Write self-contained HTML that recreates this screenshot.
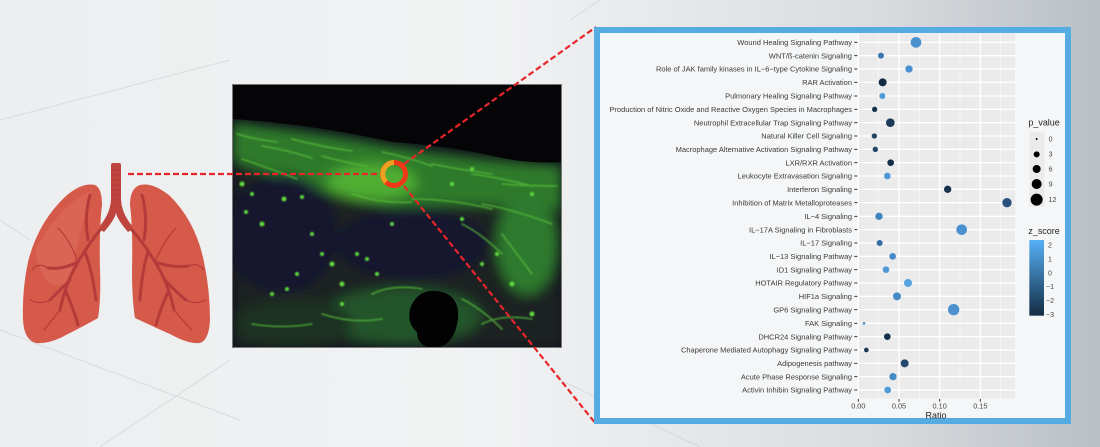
<!DOCTYPE html>
<html><head><meta charset="utf-8"><style>
html,body{margin:0;padding:0;width:1100px;height:447px;overflow:hidden;background:#eef0f1}
svg{display:block}
</style></head><body>
<svg width="1100" height="447" viewBox="0 0 1100 447" xmlns="http://www.w3.org/2000/svg" font-family="Liberation Sans, Arial, sans-serif">
<defs>
<linearGradient id="bg" x1="0" y1="0" x2="1" y2="0">
<stop offset="0" stop-color="#eceeef"/><stop offset="0.45" stop-color="#f1f2f3"/><stop offset="0.8" stop-color="#d9dcdf"/><stop offset="1" stop-color="#b9bfc4"/>
</linearGradient>
<linearGradient id="zs" x1="0" y1="0" x2="0" y2="1"><stop offset="0" stop-color="#56b1f7"/><stop offset="1" stop-color="#132b43"/></linearGradient>
<filter id="b3"><feGaussianBlur stdDeviation="3"/></filter>
<filter id="b6"><feGaussianBlur stdDeviation="6"/></filter>
<filter id="b1"><feGaussianBlur stdDeviation="0.7"/></filter>
<clipPath id="imgc"><rect x="0" y="0" width="330" height="264"/></clipPath>
</defs>
<rect width="1100" height="447" fill="url(#bg)"/>
<g stroke="#c9ced2" stroke-width="1" opacity="0.6" fill="none">
<path d="M0 120 L230 60 M0 330 L240 420 M100 447 L230 360 M560 380 L700 447 M0 220 L30 240 M570 20 L600 0"/>
</g>

<!-- Lungs -->
<g>
<rect x="111" y="163" width="10" height="40" rx="2" fill="#c0443e"/>
<g stroke="#a8333a" stroke-width="0.6"><path d="M111 170h10M111 175h10M111 180h10M111 185h10M111 190h10M111 195h10M111 200h10"/></g>
<path d="M111 200 Q110 215 98 228 L104 232 Q116 218 116 212 Q116 218 128 232 L134 228 Q122 215 121 200 Z" fill="#c0443e"/>
<path d="M95 185 Q82 182 66 196 Q38 222 28 262 Q22 290 23 320 Q24 340 36 343 Q50 344 66 335 Q84 326 98 318 Q101 300 100 270 Q99 230 102 205 Q102 188 95 185 Z" fill="#d65a4a"/>
<path d="M140 185 Q153 182 170 196 Q196 222 204 262 Q210 290 210 320 Q209 340 200 343 Q188 344 172 335 Q152 326 135 318 Q132 300 132 270 Q133 230 130 205 Q130 188 140 185 Z" fill="#d65a4a"/>
<path d="M35 250 Q60 205 92 190 Q80 230 70 280 Q45 300 35 250Z" fill="#e07060" opacity="0.5"/>
<g stroke="#b53a3a" fill="none" stroke-linecap="round">
<path d="M100 230 Q88 245 78 262 Q66 282 60 310 M78 262 Q62 270 48 268 M85 252 Q92 270 96 300 M70 280 Q60 290 50 300 M88 240 Q84 215 90 195 M66 292 Q74 310 78 325" stroke-width="3"/>
<path d="M132 230 Q145 245 155 262 Q168 282 174 310 M155 262 Q172 268 188 266 M148 252 Q142 270 140 300 M165 280 Q176 292 186 300 M144 240 Q148 215 142 195 M168 292 Q160 310 156 325" stroke-width="3"/>
<path d="M48 268 Q38 262 32 270 M60 310 Q52 320 44 330 M50 300 Q40 305 30 300 M78 262 Q70 240 58 228 M188 266 Q198 262 204 270 M174 310 Q182 320 192 330 M186 300 Q196 305 206 300 M155 262 Q164 240 176 228" stroke-width="1.2"/>
</g>
</g>

<!-- Microscopy image -->
<g transform="translate(232,84)">
<g clip-path="url(#imgc)">
<rect width="330" height="264" fill="#0d0e1c"/>
<g filter="url(#b6)">
<path d="M0 40 Q80 45 150 60 Q250 75 330 80 L330 264 L0 264 Z" fill="#1a2424"/>
<path d="M0 38 Q80 48 160 62 Q250 78 330 82 L330 125 Q250 118 160 122 Q80 108 0 75 Z" fill="#2f7a2c"/>
<ellipse cx="140" cy="98" rx="45" ry="18" fill="#4fae30"/>
<ellipse cx="295" cy="160" rx="30" ry="50" fill="#2e7a2e"/>
<ellipse cx="50" cy="150" rx="55" ry="60" fill="#14132e"/>
<ellipse cx="180" cy="160" rx="75" ry="36" fill="#13122e"/>
<ellipse cx="170" cy="232" rx="80" ry="28" fill="#24552a"/>
<ellipse cx="60" cy="240" rx="60" ry="25" fill="#1a3024"/>
</g>
<g stroke="#58c03a" stroke-width="1.6" fill="none" opacity="0.75" stroke-linecap="round" filter="url(#b1)">
<path d="M5 50 q20 6 40 8 M30 62 q25 4 50 12 M60 55 q30 8 60 12 M90 72 q20 6 45 10 M150 68 q25 5 50 14 M200 80 q30 6 60 10 M240 90 q30 4 60 12 M270 100 q25 2 55 2 M10 75 q30 10 55 20 M120 110 q30 10 60 8 M180 115 q40 0 80 10 M250 120 q30 5 70 20 M230 140 q20 10 40 30 M270 150 q15 20 30 40 M140 210 q20 -10 50 -5 M230 215 q20 10 40 30 M90 230 q30 10 60 5 M20 240 q30 5 60 0 M250 240 q20 -10 50 -5"/>
</g>
<path d="M0 0 H330 V78 Q300 80 270 74 Q220 62 160 58 Q80 40 0 35 Z" fill="#050507"/>
<path d="M178 225 Q185 205 205 207 Q228 210 226 235 Q222 264 200 264 Q185 262 185 248 Q175 240 178 225Z" fill="#020203"/>
<g fill="#5fd83c" filter="url(#b1)">
<circle cx="10" cy="100" r="2.5"/><circle cx="20" cy="110" r="2"/><circle cx="52" cy="115" r="2.5"/><circle cx="70" cy="113" r="2"/><circle cx="30" cy="140" r="2.5"/><circle cx="14" cy="128" r="2"/>
<circle cx="90" cy="170" r="2"/><circle cx="100" cy="180" r="2.5"/><circle cx="110" cy="200" r="2.5"/><circle cx="55" cy="205" r="2"/><circle cx="65" cy="190" r="2"/><circle cx="40" cy="210" r="2"/>
<circle cx="125" cy="170" r="2"/><circle cx="135" cy="175" r="2"/><circle cx="145" cy="190" r="2"/><circle cx="160" cy="140" r="2"/><circle cx="230" cy="135" r="2"/><circle cx="250" cy="180" r="2"/><circle cx="265" cy="170" r="2"/>
<circle cx="220" cy="100" r="2"/><circle cx="240" cy="85" r="2"/><circle cx="300" cy="110" r="2"/><circle cx="280" cy="200" r="2.5"/><circle cx="300" cy="230" r="2.5"/><circle cx="110" cy="220" r="2"/><circle cx="80" cy="150" r="2"/>
</g>
</g>
<rect x="0.5" y="0.5" width="329" height="263" fill="none" stroke="#777" stroke-width="1"/>
</g>

<!-- dashed lines -->
<g stroke="#e8262a" stroke-width="2.2" stroke-dasharray="6 3" fill="none">
<line x1="128" y1="174" x2="380" y2="174"/>
<line x1="404" y1="164" x2="596" y2="27"/>
<line x1="404" y1="186" x2="596" y2="424"/>
</g>
<circle cx="394" cy="174" r="11.5" fill="none" stroke="#f03818" stroke-width="5"/>
<path d="M394 162.5 A11.5 11.5 0 0 0 386 182" fill="none" stroke="#f0a020" stroke-width="5"/>

<!-- Plot frame -->
<rect x="597" y="30" width="471" height="391" fill="#f5f6f7" stroke="#55ace2" stroke-width="6"/>

<g transform="translate(590,20) scale(0.33333)">
<rect x="805" y="40" width="470" height="1095" fill="#ebebeb"/>
<g stroke="#f7f7f7" stroke-width="2">
<path d="M866 40V1135M988 40V1135M1110 40V1135M1232 40V1135"/>
</g>
<g stroke="#ffffff" stroke-width="4">
<path d="M805 40V1135M927 40V1135M1049 40V1135M1171 40V1135"/>
<path d="M805 67H1275M805 107H1275M805 147H1275M805 187H1275M805 228H1275M805 268H1275M805 308H1275M805 348H1275M805 388H1275M805 428H1275M805 468H1275M805 508H1275M805 548H1275M805 589H1275M805 629H1275M805 669H1275M805 709H1275M805 749H1275M805 789H1275M805 829H1275M805 869H1275M805 910H1275M805 950H1275M805 990H1275M805 1030H1275M805 1070H1275M805 1110H1275"/>
</g>
<g font-size="22.5" fill="#3a3a3a" text-anchor="end">
<text x="786" y="75">Wound Healing Signaling Pathway</text>
<text x="786" y="115">WNT/ß-catenin Signaling</text>
<text x="786" y="155">Role of JAK family kinases in IL−6−type Cytokine Signaling</text>
<text x="786" y="195">RAR Activation</text>
<text x="786" y="236">Pulmonary Healing Signaling Pathway</text>
<text x="786" y="276">Production of Nitric Oxide and Reactive Oxygen Species in Macrophages</text>
<text x="786" y="316">Neutrophil Extracellular Trap Signaling Pathway</text>
<text x="786" y="356">Natural Killer Cell Signaling</text>
<text x="786" y="396">Macrophage Alternative Activation Signaling Pathway</text>
<text x="786" y="436">LXR/RXR Activation</text>
<text x="786" y="476">Leukocyte Extravasation Signaling</text>
<text x="786" y="516">Interferon Signaling</text>
<text x="786" y="556">Inhibition of Matrix Metalloproteases</text>
<text x="786" y="597">IL−4 Signaling</text>
<text x="786" y="637">IL−17A Signaling in Fibroblasts</text>
<text x="786" y="677">IL−17 Signaling</text>
<text x="786" y="717">IL−13 Signaling Pathway</text>
<text x="786" y="757">ID1 Signaling Pathway</text>
<text x="786" y="797">HOTAIR Regulatory Pathway</text>
<text x="786" y="837">HIF1a Signaling</text>
<text x="786" y="877">GP6 Signaling Pathway</text>
<text x="786" y="918">FAK Signaling</text>
<text x="786" y="958">DHCR24 Signaling Pathway</text>
<text x="786" y="998">Chaperone Mediated Autophagy Signaling Pathway</text>
<text x="786" y="1038">Adipogenesis pathway</text>
<text x="786" y="1078">Acute Phase Response Signaling</text>
<text x="786" y="1118">Activin Inhibin Signaling Pathway</text>
</g>
<g stroke="#333" stroke-width="3">
<path d="M793 67h9M793 107h9M793 147h9M793 187h9M793 228h9M793 268h9M793 308h9M793 348h9M793 388h9M793 428h9M793 468h9M793 508h9M793 548h9M793 589h9M793 629h9M793 669h9M793 709h9M793 749h9M793 789h9M793 829h9M793 869h9M793 910h9M793 950h9M793 990h9M793 1030h9M793 1070h9M793 1110h9"/>
<path d="M805 1137v8M927 1137v8M1049 1137v8M1171 1137v8"/>
</g>
<g font-size="22" fill="#444" text-anchor="middle">
<text x="805" y="1166">0.00</text><text x="927" y="1166">0.05</text><text x="1049" y="1166">0.10</text><text x="1171" y="1166">0.15</text>
</g>
<text x="1038" y="1196" font-size="27" fill="#222" text-anchor="middle">Ratio</text>
<g>
<circle cx="978" cy="67" r="16" fill="#4b91d0"/>
<circle cx="873" cy="107" r="9" fill="#3a78b0"/>
<circle cx="957" cy="147" r="11" fill="#4b91d0"/>
<circle cx="878" cy="187" r="12" fill="#132b43"/>
<circle cx="877" cy="228" r="9" fill="#4f99d8"/>
<circle cx="854" cy="268" r="8" fill="#17314d"/>
<circle cx="901" cy="308" r="13" fill="#1c3a58"/>
<circle cx="853" cy="348" r="8" fill="#214568"/>
<circle cx="856" cy="388" r="8" fill="#214568"/>
<circle cx="902" cy="428" r="10" fill="#16304b"/>
<circle cx="892" cy="468" r="10" fill="#4f99d8"/>
<circle cx="1073" cy="508" r="11" fill="#17314d"/>
<circle cx="1251" cy="548" r="14" fill="#27527d"/>
<circle cx="867" cy="589" r="11" fill="#3f85c2"/>
<circle cx="1115" cy="629" r="16" fill="#4b91d0"/>
<circle cx="869" cy="669" r="9" fill="#336ea3"/>
<circle cx="908" cy="709" r="10" fill="#468bc8"/>
<circle cx="888" cy="749" r="10" fill="#4f99d8"/>
<circle cx="954" cy="789" r="12" fill="#56a2e2"/>
<circle cx="921" cy="829" r="12" fill="#468bc8"/>
<circle cx="1091" cy="869" r="17" fill="#4b91d0"/>
<circle cx="822" cy="910" r="4" fill="#4b91d0"/>
<circle cx="892" cy="950" r="10" fill="#17314d"/>
<circle cx="829" cy="990" r="7" fill="#1c3a58"/>
<circle cx="944" cy="1030" r="12" fill="#24486c"/>
<circle cx="909" cy="1070" r="11" fill="#468bc8"/>
<circle cx="893" cy="1110" r="10" fill="#4f99d8"/>
</g>
<text x="1315" y="316" font-size="27" fill="#222">p_value</text>
<rect x="1318" y="335" width="46" height="225" fill="#ebebeb"/>
<g fill="#000"><circle cx="1340" cy="357" r="3"/><circle cx="1340" cy="403" r="9"/><circle cx="1340" cy="447" r="12"/><circle cx="1340" cy="492" r="15"/><circle cx="1340" cy="539" r="18"/></g>
<g font-size="21" fill="#444"><text x="1376" y="364">0</text><text x="1376" y="410">3</text><text x="1376" y="454">6</text><text x="1376" y="499">9</text><text x="1376" y="546">12</text></g>
<text x="1315" y="642" font-size="27" fill="#222">z_score</text>
<rect x="1318" y="660" width="44" height="227" fill="url(#zs)"/>
<g font-size="21" fill="#444"><text x="1374" y="682">2</text><text x="1374" y="724">1</text><text x="1374" y="766">0</text><text x="1368" y="807">−1</text><text x="1368" y="849">−2</text><text x="1368" y="891">−3</text></g>
</g>
</svg>
</body></html>
